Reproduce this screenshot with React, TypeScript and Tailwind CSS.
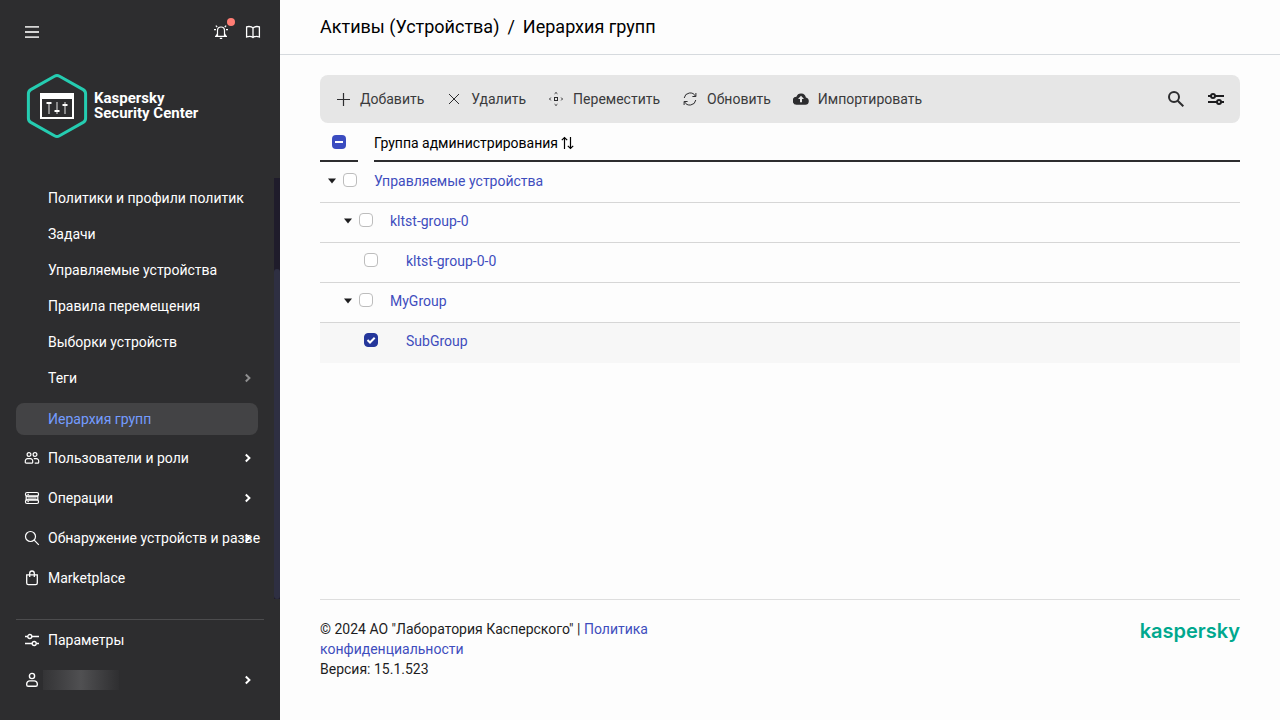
import React, { useState } from 'react';

const stroke = {
  width: 16,
  height: 16,
  viewBox: '0 0 16 16',
  fill: 'none',
  stroke: 'currentColor',
  'aria-hidden': true,
} as const;

const MenuIcon = () => (
  <svg {...stroke} strokeWidth="1.8"><path d="M1 2.800h14M1 8h14M1 13.200h14" /></svg>
);

const BellIcon = () => (
  <svg {...stroke} strokeWidth="1.2">
    <path d="M4.500 12V6.500a3.500 3.500 0 0 1 7 0V12M2 12.400h12M6.800 14.300h2.400M1 5.600h2M13 5.600h2M2.800 1.600l1.400 1.400M13.200 1.600 11.800 3M4.500 9.500l-1.400 2.700M11.500 9.500l1.400 2.700" />
  </svg>
);

const BookIcon = () => (
  <svg {...stroke} strokeWidth="1.3">
    <path d="M8 4C7 2.8 5.5 2.5 4 2.5S1.600 2.900 1.600 2.900V13c1.500-.5 4.900-.6 6.400.6 1.500-1.200 4.900-1.100 6.400-.6V2.900S13.500 2.500 12 2.500 9 2.800 8 4zM8 4v9.500" />
  </svg>
);

const UsersIcon = () => (
  <svg {...stroke} strokeWidth="1.2">
    <circle cx="5" cy="4.500" r="1.900" />
    <circle cx="11" cy="4.500" r="1.900" />
    <path d="M3.500 8.700h3a2.200 2.200 0 0 1 2.200 2.200v1.300c0 .6-.4 1-1 1H2.300c-.6 0-1-.4-1-1v-1.300a2.200 2.200 0 0 1 2.200-2.200zM9.800 8.700h2.700a2.200 2.200 0 0 1 2.200 2.200v1.300c0 .6-.4 1-1 1h-3" />
  </svg>
);

const ServerIcon = () => (
  <svg {...stroke} strokeWidth="1.200">
    <rect x="1.500" y="2.500" width="13" height="3.600" rx="1.500" />
    <rect x="2.200" y="6.100" width="11.600" height="3.800" />
    <rect x="1.500" y="9.900" width="13" height="3.600" rx="1.500" />
    <path d="M3.500 4.300h1.300M3.500 8h9M3.500 11.700h1.300" />
  </svg>
);

const SearchIcon = () => (
  <svg {...stroke} strokeWidth="1.200">
    <circle cx="6.500" cy="6.500" r="5" />
    <path d="m10.200 10.200 4.600 4.600" />
  </svg>
);

const BagIcon = () => (
  <svg {...stroke} strokeWidth="1.300">
    <path d="M2.700 4.800h10.600v8.200c0 1-.7 1.700-1.700 1.700H4.400c-1 0-1.700-.7-1.700-1.700zM5.700 7V3.300a2.300 2.300 0 0 1 4.600 0V7" />
  </svg>
);

const SlidersIcon = () => (
  <svg {...stroke} strokeWidth="1.300">
    <path d="M1 4.500h2.800M7.800 4.500H15M1 11.500h7.200M12.200 11.500H15" />
    <circle cx="5.800" cy="4.500" r="2" />
    <circle cx="10.200" cy="11.500" r="2" />
  </svg>
);

const UserIcon = () => (
  <svg {...stroke} strokeWidth="1.400">
    <circle cx="8" cy="4" r="2.600" />
    <path d="M5.700 8.900h4.600a3 3 0 0 1 3 3v.8c0 .9-.7 1.600-1.600 1.600H4.300c-.9 0-1.600-.7-1.600-1.600v-.8a3 3 0 0 1 3-3z" />
  </svg>
);

const ChevronIcon = ({ className = '' }: { className?: string }) => (
  <svg {...stroke} strokeWidth="2" className={className}><path d="m5.800 4.500 3.600 3.500-3.600 3.500" /></svg>
);

const PlusIcon = () => (
  <svg {...stroke} strokeWidth="1.200"><path d="M8.500 2v13M2 8.500h13" /></svg>
);

const CrossIcon = () => (
  <svg {...stroke} strokeWidth="1"><path d="m3 3 10 10M13 3 3 13" /></svg>
);

const MoveIcon = () => (
  <svg {...stroke} strokeWidth="1">
    <rect x="6.500" y="6.500" width="3" height="3" />
    <path d="M6.600 2.800 8 1.500l1.400 1.300M6.600 13.200 8 14.500l1.400-1.300M2.800 6.600 1.500 8l1.300 1.400M13.200 6.600 14.500 8l-1.300 1.400" />
  </svg>
);

const RefreshIcon = () => (
  <svg {...stroke} strokeWidth="1">
    <path d="M2.200 7A6 6 0 0 1 13.500 5.300M13.800 9A6 6 0 0 1 2.500 10.700M13.900 2v3.500h-3.500M2.100 14v-3.500h3.500" />
  </svg>
);

const CloudIcon = () => (
  <svg width="16" height="16" viewBox="0 0 16 16" aria-hidden="true">
    <path fill="currentColor" d="M12.900 6.500A4.900 4.900 0 0 0 3.400 5.800 4 4 0 0 0 4 13.800h8.300a3.700 3.700 0 0 0 .6-7.300z" />
    <path fill="#e6e6e6" d="M8 4.800 11 8H9v3.200H7V8H5z" />
  </svg>
);

const SortIcon = () => (
  <svg {...stroke} strokeWidth="1.200">
    <path d="M4.500 14V2.500M1.800 5.200 4.500 2.500l2.700 2.700M10.500 2v11.500M7.800 10.800l2.700 2.700 2.700-2.700" />
  </svg>
);

const ProductLogo = () => (
  <svg width="62" height="66" viewBox="0 0 62 66" fill="none" aria-hidden="true">
    <path
      d="M28.500 3.200a5 5 0 0 1 5 0l23.700 13.400a5 5 0 0 1 2.400 4.200v24.400a5 5 0 0 1-2.400 4.200L33.500 62.800a5 5 0 0 1-5 0L4.800 49.400a5 5 0 0 1-2.400-4.200V20.800a5 5 0 0 1 2.400-4.200z"
      stroke="#25ccb1"
      strokeWidth="3"
    />
    <rect x="15" y="21" width="32" height="24" stroke="#fff" strokeWidth="2" />
    <path d="M14 20h34v6H14z" fill="#fff" />
    <path d="M23 29v12M31 29v12M39 29v12" stroke="#a9a9aa" strokeWidth="1.500" />
    <path d="M20.500 30h5M28.500 38h5M36.500 32h5" stroke="#fff" strokeWidth="2" />
  </svg>
);

const subItems = [
  { label: 'Политики и профили политик' },
  { label: 'Задачи' },
  { label: 'Управляемые устройства' },
  { label: 'Правила перемещения' },
  { label: 'Выборки устройств' },
  { label: 'Теги', expandable: true },
];

const sections = [
  { label: 'Пользователи и роли', icon: UsersIcon, expandable: true },
  { label: 'Операции', icon: ServerIcon, expandable: true },
  { label: 'Обнаружение устройств и разве', icon: SearchIcon, expandable: true },
  { label: 'Marketplace', icon: BagIcon, expandable: false },
];

const actions = [
  { label: 'Добавить', icon: PlusIcon },
  { label: 'Удалить', icon: CrossIcon },
  { label: 'Переместить', icon: MoveIcon },
  { label: 'Обновить', icon: RefreshIcon },
  { label: 'Импортировать', icon: CloudIcon },
];

const groups = [
  { name: 'Управляемые устройства', indent: 'pl-0', parent: true },
  { name: 'kltst-group-0', indent: 'pl-4', parent: true },
  { name: 'kltst-group-0-0', indent: 'pl-8', parent: false },
  { name: 'MyGroup', indent: 'pl-4', parent: true },
  { name: 'SubGroup', indent: 'pl-8', parent: false },
];

const Sidebar = () => (
  <aside className="flex w-[280px] shrink-0 flex-col bg-[#2d2d2f] text-white">
    <div className="flex h-16 items-center pr-[19px] pl-6">
      <button type="button" aria-label="Меню" className="text-[#d5d5d5]"><MenuIcon /></button>
      <div className="ml-auto flex items-center gap-4">
        <button type="button" aria-label="Уведомления" className="relative">
          <BellIcon />
          <span className="absolute -top-1.5 -right-1.5 h-2 w-2 rounded-full bg-[#ff7d74]" />
        </button>
        <button type="button" aria-label="Справка"><BookIcon /></button>
      </div>
    </div>

    <div className="flex h-[114px] items-start gap-1.5 px-[26px] pt-[9px]">
      <ProductLogo />
      <div className="pt-[18px] text-[15px] leading-[15px] font-bold text-white">
        Kaspersky<br />Security Center
      </div>
    </div>

    <div className="flex flex-1">
      <nav className="min-w-0 flex-1 pt-0.5 pr-4">
        {subItems.map((item) => (
          <a key={item.label} href="#" className="relative flex h-9 items-center pl-12">
            {item.label}
            {item.expandable && <ChevronIcon className="absolute right-0.5 text-[#8f8f90]" />}
          </a>
        ))}
        <a href="#" aria-current="page" className="mt-[7px] mb-[3px] ml-4 flex h-8 items-center rounded-lg bg-[#434345] pl-8 text-[#749cff]">
          Иерархия групп
        </a>
        {sections.map(({ label, icon: Icon, expandable }) => (
          <a key={label} href="#" className="relative flex h-10 items-center gap-2 pl-6">
            <span className="shrink-0"><Icon /></span>
            <span className="whitespace-nowrap">{label}</span>
            {expandable && <ChevronIcon className="absolute right-0.5" />}
          </a>
        ))}
      </nav>
      <div className="flex w-1.5 flex-col bg-[#1f1c2b] pt-[91px]">
        <div className="flex-1 rounded-full bg-[#2e2f42]" />
      </div>
    </div>

    <div className="mx-4 mt-5 border-t border-[#4c4c4e] pb-5">
      <a href="#" className="flex h-10 items-center gap-2 px-2">
        <SlidersIcon />
        Параметры
      </a>
      <button type="button" aria-label="Учетная запись" className="flex h-10 w-full items-center px-2">
        <UserIcon />
        <span className="ml-[3px] h-5 w-[76px] bg-linear-to-r from-[#343436] via-[#505052] to-[#2f2f31]" />
        <ChevronIcon className="ml-auto" />
      </button>
    </div>
  </aside>
);

const Toolbar = () => (
  <div className="flex h-12 items-center rounded-lg bg-[#e6e6e6] pr-4 pl-[15px] text-[#3a3a3c]">
    <div className="flex items-center gap-[22px]">
      {actions.map(({ label, icon: Icon }) => (
        <button key={label} type="button" className="flex items-center gap-[9px]">
          <span className="text-[#2d2d2f]"><Icon /></span>
          {label}
        </button>
      ))}
    </div>
    <div className="ml-auto flex items-center gap-6 text-[#2d2d2f]">
      <button type="button" aria-label="Поиск">
        <svg {...stroke} strokeWidth="2">
          <circle cx="6" cy="6" r="5" />
          <path d="m9.700 9.700 5.600 5.600" />
        </svg>
      </button>
      <button type="button" aria-label="Фильтр" className="text-[#1d1d1f]">
        <svg {...stroke} strokeWidth="2">
          <path d="M0 5h3M7 5h9M0 11h9M13 11h3" />
          <circle cx="5" cy="5" r="2" />
          <circle cx="11" cy="11" r="2" />
        </svg>
      </button>
    </div>
  </div>
);

const GroupTable = () => {
  const [selected, setSelected] = useState<string[]>(['SubGroup']);

  const toggle = (name: string) =>
    setSelected((prev) => (prev.includes(name) ? prev.filter((n) => n !== name) : [...prev, name]));

  return (
    <table className="w-full table-fixed border-collapse text-left">
      <colgroup>
        <col className="w-[54px]" />
        <col />
      </colgroup>
      <thead>
        <tr>
          <th className="p-0 pr-4 font-normal">
            <div className="flex h-[39px] justify-center border-b-2 border-[#2d2d2f] pt-3">
              <label className="relative h-3.5 w-3.5">
                <input
                  type="checkbox"
                  aria-label="Выбрать все"
                  className="block h-3.5 w-3.5 appearance-none rounded bg-[#3b4cc0]"
                  checked={selected.length > 0}
                  onChange={() => setSelected(selected.length ? [] : groups.map((g) => g.name))}
                />
                <span className="absolute top-1.5 left-[3px] h-0.5 w-2 bg-white" />
              </label>
            </div>
          </th>
          <th className="p-0 font-normal">
            <div className="flex h-[39px] items-start gap-0.5 border-b-2 border-[#2d2d2f] pt-2.5 text-black">
              Группа администрирования
              <button type="button" aria-label="Сортировать" className="mt-0.5"><SortIcon /></button>
            </div>
          </th>
        </tr>
      </thead>
      <tbody>
        {groups.map((group, index) => {
          const checked = selected.includes(group.name);
          return (
            <tr
              key={group.name}
              className={`${index > 0 ? 'border-t border-[#d6d6d6]' : 'border-t border-transparent'} ${checked ? 'bg-[#f7f7f7]' : ''}`}
            >
              <td colSpan={2} className="h-10 p-0 pt-2 align-top">
                <div className={`flex h-5 items-center ${group.indent}`}>
                  <div className={`flex w-[54px] shrink-0 items-center gap-[7px] pb-0.5 ${group.parent ? 'pl-2' : 'pl-3'}`}>
                    {group.parent && (
                      <button type="button" aria-label={`Свернуть ${group.name}`} className="pt-0.5">
                        <svg width="8" height="6" viewBox="0 0 8 6" aria-hidden="true">
                          <path d="M0 .5h8L4 5.500z" fill="#1d1d1f" />
                        </svg>
                      </button>
                    )}
                    <span className="relative h-3.5 w-3.5">
                      <input
                        type="checkbox"
                        className="block h-3.5 w-3.5 appearance-none rounded border border-[#bdbdbd] bg-white checked:border-[#25379b] checked:bg-[#25379b]"
                        aria-label={group.name}
                        checked={checked}
                        onChange={() => toggle(group.name)}
                      />
                      {checked && (
                        <svg className="pointer-events-none absolute inset-0" width="14" height="14" viewBox="0 0 14 14" fill="none" aria-hidden="true">
                          <path d="m3.500 7 2.500 2.500 4.700-4.700" stroke="#fff" strokeWidth="2" />
                        </svg>
                      )}
                    </span>
                  </div>
                  <a href="#" className="text-[#3f4dbd]">{group.name}</a>
                </div>
              </td>
            </tr>
          );
        })}
      </tbody>
    </table>
  );
};

const App = () => {
  return (
    <div className="flex min-h-screen bg-[#fdfdfd] font-['Roboto','Liberation_Sans',sans-serif] text-[14px] leading-5 text-[#1d1d1f]">
      <Sidebar />
      <div className="flex min-w-0 flex-1 flex-col">
        <header className="flex h-[55px] items-center border-b border-[#d6dade] px-10 text-[18px] text-black">
          <a href="#">Активы (Устройства)</a>
          <span className="px-2">/</span>
          <h1>Иерархия групп</h1>
        </header>

        <main className="flex-1 px-10 pt-5">
          <Toolbar />
          <GroupTable />
        </main>

        <footer className="mx-10 flex items-start justify-between border-t border-[#dedede] pt-[19px] pb-[41px]">
          <div className="w-[360px]">
            <p>
              © 2024 АО "Лаборатория Касперского" |{' '}
              <a href="#" className="text-[#3f4dbd]">Политика конфиденциальности</a>
            </p>
            <p>Версия: 15.1.523</p>
          </div>
          <div className="pt-0.5 font-['Inter',sans-serif] text-[20px] leading-5 font-semibold text-[#00a88e]">kaspersky</div>
        </footer>
      </div>
    </div>
  );
};

export default App;
